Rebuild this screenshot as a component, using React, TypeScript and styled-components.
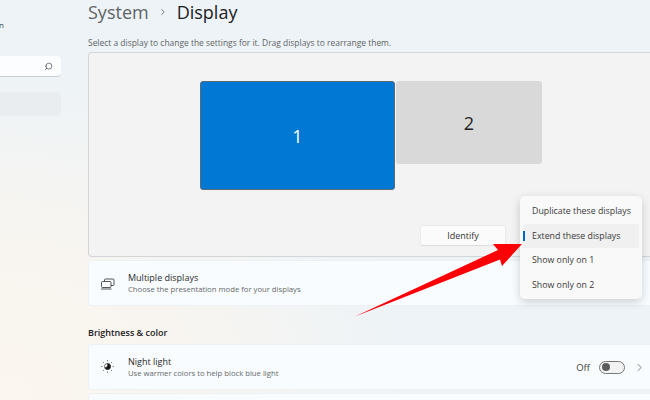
import React from "react";
import styled, { createGlobalStyle } from "styled-components";
import { ChevronRight, Search } from "lucide-react";

const GlobalStyle = createGlobalStyle`
  html, body {
    margin: 0;
    padding: 0;
    width: 650px;
    height: 400px;
    overflow: hidden;
  }
  * {
    box-sizing: border-box;
  }
`;

const Page = styled.div`
  position: relative;
  display: flex;
  width: 650px;
  height: 400px;
  overflow: hidden;
  font-family: "Open Sans", "Noto Sans", sans-serif;
  color: #1b1b1b;
  background:
    radial-gradient(ellipse 420px 340px at 0 400px, #fbf6ef 0%, #f8f5f0 45%, rgba(248, 245, 240, 0) 100%),
    #edf3f7;
`;

const Sidebar = styled.aside`
  width: 61px;
  flex-shrink: 0;
  display: flex;
  flex-direction: column;
`;

const CutOffName = styled.div`
  height: 56px;
  padding-top: 19px;
  font-size: 8px;
  line-height: 12px;
  color: #444;
  text-indent: -1px;
`;

const SearchBox = styled.div`
  height: 21px;
  display: flex;
  align-items: center;
  justify-content: flex-end;
  padding-right: 8px;
  border-radius: 0 4px 4px 0;
  background: #fbfdfe;
  border-bottom: 1px solid #c9cdd0;
  color: #555;
`;

const ActiveNav = styled.div`
  height: 24px;
  margin-top: 15px;
  border-radius: 0 4px 4px 0;
  background: #e9edef;
`;

const Main = styled.main`
  flex: 1;
  min-width: 0;
  margin-left: 27px;
  display: flex;
  flex-direction: column;

  > * {
    flex-shrink: 0;
  }
`;

const Breadcrumb = styled.h1`
  margin: 0;
  height: 24px;
  display: flex;
  align-items: center;
  gap: 9px;
  font-size: 18px;
  line-height: 24px;
  font-weight: 500;
`;

const Crumb = styled.span<{ $muted?: boolean }>`
  color: ${({ $muted }) => ($muted ? "#5f6365" : "#1a1c1e")};
`;

const Hint = styled.p`
  margin: 12px 0 0;
  height: 16px;
  font-size: 8.45px;
  line-height: 13px;
  color: #5f6365;
`;

const Arrangement = styled.section`
  height: 205px;
  display: flex;
  flex-direction: column;
  padding: 28px 0 0 111px;
  background: #f3f3f3;
  border: 1px solid #d3d6d8;
  border-right: none;
  border-radius: 4px 0 0 4px;
`;

const MonitorRow = styled.div`
  display: flex;
  align-items: flex-start;
  gap: 1px;
`;

const Monitor = styled.div<{ $active?: boolean }>`
  width: ${({ $active }) => ($active ? "195px" : "146px")};
  height: ${({ $active }) => ($active ? "109px" : "83px")};
  display: flex;
  align-items: center;
  justify-content: center;
  border-radius: 3px;
  font-size: 18px;
  background: ${({ $active }) => ($active ? "#0078d4" : "#d9d9d9")};
  color: ${({ $active }) => ($active ? "#fff" : "#222")};
  border: ${({ $active }) => ($active ? "1px solid #5a6b78" : "none")};
`;

const IdentifyButton = styled.button`
  width: 86px;
  height: 21px;
  margin: 35px 0 0 220px;
  padding: 0;
  font: inherit;
  font-size: 9px;
  color: #333;
  background: #fbfbfb;
  border: 1px solid #ececec;
  border-bottom-color: #dcdcdc;
  border-radius: 3px;
`;

const Card = styled.div<{ $top?: number }>`
  height: 46px;
  margin-top: ${({ $top }) => $top ?? 3}px;
  display: flex;
  align-items: center;
  padding: 0 4px 0 11px;
  background: #f9fcfe;
  border: 1px solid #eef1f3;
  border-right: none;
  border-radius: 4px 0 0 4px;
`;

const CardIcon = styled.svg`
  width: 16px;
  height: 16px;
  flex-shrink: 0;
  margin-right: 12px;
  color: #444;
`;

const CardText = styled.div`
  flex: 1;
  min-width: 0;
`;

const CardTitle = styled.div`
  font-size: 9px;
  line-height: 12px;
  color: #2a2a2a;
`;

const CardSub = styled.div`
  font-size: 7.7px;
  line-height: 10px;
  color: #66696b;
`;

const SectionTitle = styled.h2`
  margin: 20px 0 0;
  height: 14px;
  font-size: 9px;
  line-height: 14px;
  font-weight: 600;
  color: #222;
`;

const ToggleLabel = styled.span`
  font-size: 9.5px;
  color: #444;
  margin-right: 9px;
`;

const Toggle = styled.span`
  width: 26px;
  height: 13px;
  display: flex;
  align-items: center;
  padding-left: 2px;
  margin-right: 8px;
  border: 1px solid #777;
  border-radius: 7px;
  background: #f3f3f3;
`;

const Knob = styled.span`
  width: 8px;
  height: 8px;
  border-radius: 50%;
  background: #5c5c5c;
`;

const Flyout = styled.ul`
  position: absolute;
  left: 520px;
  top: 196px;
  width: 122px;
  height: 103px;
  margin: 0;
  padding: 3px;
  list-style: none;
  background: #f9f9f9;
  border-radius: 5px;
  box-shadow: 0 3px 10px rgba(0, 0, 0, 0.18);
`;

const FlyoutItem = styled.li<{ $selected?: boolean }>`
  position: relative;
  height: 24.5px;
  display: flex;
  align-items: center;
  padding-left: 9px;
  font-size: 8.8px;
  color: #3a3a3a;
  border-radius: 3px;
  background: ${({ $selected }) => ($selected ? "#f0f0f0" : "transparent")};

  &::before {
    content: "";
    display: ${({ $selected }) => ($selected ? "block" : "none")};
    position: absolute;
    left: 0;
    top: 7px;
    width: 2px;
    height: 10px;
    background: #0067c0;
  }
`;

const ArrowOverlay = styled.svg`
  position: absolute;
  left: 0;
  top: 0;
  width: 650px;
  height: 400px;
  pointer-events: none;
`;

const modes = ["Duplicate these displays", "Extend these displays", "Show only on 1", "Show only on 2"];

export default function App() {
  return (
    <Page>
      <GlobalStyle />
      <Sidebar>
        <CutOffName>n</CutOffName>
        <SearchBox>
          <Search size={9} style={{ transform: "scaleX(-1)" }} />
        </SearchBox>
        <ActiveNav />
      </Sidebar>
      <Main>
        <Breadcrumb>
          <Crumb $muted>System</Crumb>
          <ChevronRight size={10} color="#5f6365" strokeWidth={2} />
          <Crumb>Display</Crumb>
        </Breadcrumb>
        <Hint>Select a display to change the settings for it. Drag displays to rearrange them.</Hint>
        <Arrangement>
          <MonitorRow>
            <Monitor $active>1</Monitor>
            <Monitor>2</Monitor>
          </MonitorRow>
          <IdentifyButton>Identify</IdentifyButton>
        </Arrangement>
        <Card>
          <CardIcon viewBox="0 0 16 16" fill="none" stroke="currentColor" strokeWidth="0.9">
            <path d="M4.500 6.500V5a1 1 0 0 1 1-1h7.500a1 1 0 0 1 1 1v4.500a1 1 0 0 1-1 1h-2" />
            <rect x="1.500" y="6.500" width="9.500" height="6" rx="1" />
            <path d="M1 14h10.500" />
          </CardIcon>
          <CardText>
            <CardTitle>Multiple displays</CardTitle>
            <CardSub>Choose the presentation mode for your displays</CardSub>
          </CardText>
        </Card>
        <SectionTitle>Brightness &amp; color</SectionTitle>
        <Card $top={4}>
          <CardIcon viewBox="0 0 16 16" fill="none" stroke="currentColor" strokeWidth="0.8">
            <circle cx="7.500" cy="7.500" r="3" fill="#fff" />
            <path d="M7.500 4.500a3 3 0 0 1 0 6 3 3 0 0 1-2.700-1.700A3.500 3.500 0 0 0 7.500 4.500z" fill="#111" />
            <path d="M7.500 1.200v1.200M7.500 12.600v1.200M1.200 7.500h1.200M12.600 7.500h1.200M3 3l.8.8M11.200 11.200l.8.800M3 12l.8-.8M11.200 3.800l.8-.8" />
          </CardIcon>
          <CardText>
            <CardTitle>Night light</CardTitle>
            <CardSub>Use warmer colors to help block blue light</CardSub>
          </CardText>
          <ToggleLabel>Off</ToggleLabel>
          <Toggle>
            <Knob />
          </Toggle>
          <ChevronRight size={13} color="#555" strokeWidth={1.3} />
        </Card>
        <Card />
      </Main>
      <Flyout>
        {modes.map((mode, i) => (
          <FlyoutItem key={mode} $selected={i === 1}>
            {mode}
          </FlyoutItem>
        ))}
      </Flyout>
      <ArrowOverlay viewBox="0 0 650 400">
        <polygon points="355,316.500 498,250 493,244 522,244 502,266 500,259.500" fill="#fb0007" />
      </ArrowOverlay>
    </Page>
  );
}
